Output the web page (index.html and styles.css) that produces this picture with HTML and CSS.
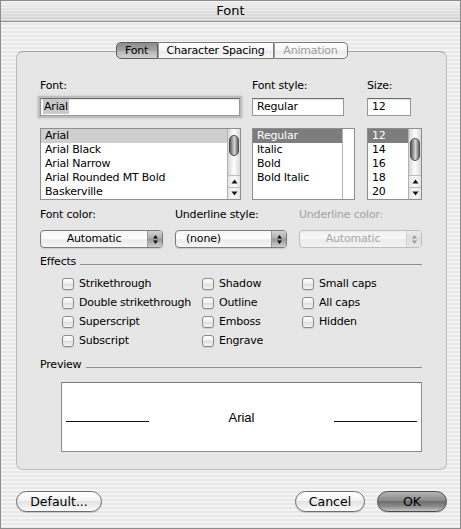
FILE: index.html
```html
<!DOCTYPE html>
<html>
<head>
<meta charset="utf-8">
<title>Font</title>
<link rel="stylesheet" href="styles.css">
</head>
<body>
<div class="window">
  <div class="titlebar">Font</div>
  <div class="main">
    <div class="tabs">
      <div class="tab sel w1">Font</div>
      <div class="tab w2">Character Spacing</div>
      <div class="tab dis w3">Animation</div>
    </div>
    <div class="group">
      <div class="top">
        <div class="col c1">
          <div class="label">Font:</div>
          <div class="field f1 focus"><span class="seltext">Arial</span></div>
          <div class="list">
            <div class="items">
              <div class="item hl">Arial</div>
              <div class="item">Arial Black</div>
              <div class="item">Arial Narrow</div>
              <div class="item">Arial Rounded MT Bold</div>
              <div class="item">Baskerville</div>
            </div>
            <div class="scroll">
              <div class="thumb"></div>
              <div class="fill"></div>
              <div class="arr"><svg width="7" height="5" viewBox="0 0 7 5"><path d="M3.5 0.5 L6.5 4.5 H0.5Z" fill="#111"/></svg></div>
              <div class="arr"><svg width="7" height="5" viewBox="0 0 7 5"><path d="M0.5 0.5 H6.5 L3.5 4.5Z" fill="#111"/></svg></div>
            </div>
          </div>
        </div>
        <div class="col c2">
          <div class="label">Font style:</div>
          <div class="field f2">Regular</div>
          <div class="list">
            <div class="items">
              <div class="item dk">Regular</div>
              <div class="item">Italic</div>
              <div class="item">Bold</div>
              <div class="item">Bold Italic</div>
            </div>
            <div class="scroll empty"></div>
          </div>
        </div>
        <div class="col c3">
          <div class="label">Size:</div>
          <div class="field f3">12</div>
          <div class="list">
            <div class="items">
              <div class="item dk">12</div>
              <div class="item">14</div>
              <div class="item">16</div>
              <div class="item">18</div>
              <div class="item">20</div>
            </div>
            <div class="scroll">
              <div class="thumb big"></div>
              <div class="fill"></div>
              <div class="arr"><svg width="7" height="5" viewBox="0 0 7 5"><path d="M3.5 0.5 L6.5 4.5 H0.5Z" fill="#111"/></svg></div>
              <div class="arr"><svg width="7" height="5" viewBox="0 0 7 5"><path d="M0.5 0.5 H6.5 L3.5 4.5Z" fill="#111"/></svg></div>
            </div>
          </div>
        </div>
      </div>

      <div class="pop-labels">
        <div class="label">Font color:</div>
        <div class="label">Underline style:</div>
        <div class="label disabled">Underline color:</div>
      </div>
      <div class="pops">
        <div class="popup"><div class="val">Automatic</div><div class="parr"><svg width="7" height="11" viewBox="0 0 7 11"><path d="M3.5 1 L6 4.5 H1Z M1 6.5 H6 L3.5 10Z" fill="#111"/></svg></div></div>
        <div class="popup"><div class="val left">(none)</div><div class="parr"><svg width="7" height="11" viewBox="0 0 7 11"><path d="M3.5 1 L6 4.5 H1Z M1 6.5 H6 L3.5 10Z" fill="#111"/></svg></div></div>
        <div class="popup off"><div class="val">Automatic</div><div class="parr"><svg width="7" height="11" viewBox="0 0 7 11"><path d="M3.5 1 L6 4.5 H1Z M1 6.5 H6 L3.5 10Z" fill="#9a9a9a"/></svg></div></div>
      </div>

      <div class="sect"><span>Effects</span><div class="rule"></div></div>
      <div class="effects">
        <label class="chk"><span class="cb"></span>Strikethrough</label>
        <label class="chk"><span class="cb"></span>Shadow</label>
        <label class="chk"><span class="cb"></span>Small caps</label>
        <label class="chk"><span class="cb"></span>Double strikethrough</label>
        <label class="chk"><span class="cb"></span>Outline</label>
        <label class="chk"><span class="cb"></span>All caps</label>
        <label class="chk"><span class="cb"></span>Superscript</label>
        <label class="chk"><span class="cb"></span>Emboss</label>
        <label class="chk"><span class="cb"></span>Hidden</label>
        <label class="chk"><span class="cb"></span>Subscript</label>
        <label class="chk"><span class="cb"></span>Engrave</label>
      </div>

      <div class="sect sect2"><span>Preview</span><div class="rule"></div></div>
      <div class="preview">
        <div class="pv-row">
          <div class="pv-line"></div>
          <div class="pv-text">Arial</div>
          <div class="pv-line"></div>
        </div>
      </div>
    </div>

    <div class="buttons">
      <div class="btn default">Default...</div>
      <div class="btn cancel">Cancel</div>
      <div class="btn ok">OK</div>
    </div>
  </div>
</div>
</body>
</html>
```

FILE: styles.css
```css
html, body {
  margin: 0;
  padding: 0;
  background: #fff;
}
body {
  font-family: "DejaVu Sans", sans-serif;
  font-size: 11px;
  letter-spacing: -0.2px;
  color: #000;
}
.window {
  width: 461px;
  height: 529px;
  box-sizing: border-box;
  border: 1px solid #8c8c8c;
  background: repeating-linear-gradient(#f4f4f4 0 2px, #e8e8e8 2px 4px);
  display: flex;
  flex-direction: column;
}
.titlebar {
  height: 20px;
  border-bottom: 1px solid #8f8f8f;
  background:
    repeating-linear-gradient(rgba(255,255,255,0.35) 0 1px, transparent 1px 3px),
    linear-gradient(#eeeeee, #d2d2d2);
  text-align: center;
  font-size: 13px;
  line-height: 20px;
  letter-spacing: 0;
}
.main {
  padding: 20px 13px 0 15px;
}
.tabs {
  display: flex;
  justify-content: center;
  position: relative;
  z-index: 1;
  height: 17px;
}
.tab {
  height: 17px;
  box-sizing: border-box;
  border: 1px solid #7a7a7a;
  border-left: 1px solid #a0a0a0;
  line-height: 15px;
  text-align: center;
  background: linear-gradient(#ffffff, #f6f6f6 50%, #ebebeb 52%, #f8f8f8);
}
.tab:first-child {
  border-left: 1px solid #6a6a6a;
  border-radius: 5px 0 0 5px;
}
.tab:last-child {
  border-radius: 0 5px 5px 0;
}
.tab.sel {
  background: linear-gradient(#8c8c8c, #a4a4a4 50%, #b4b4b4 52%, #d2d2d2);
  border-color: #5e5e5e;
}
.tab.dis { color: #9c9c9c; }
.w1 { width: 42px; }
.w2 { width: 116px; }
.w3 { width: 74px; }

.group {
  margin-top: -8px;
  height: 419px;
  box-sizing: border-box;
  border: 1px solid #bcbcbc;
  border-top-color: #a4a4a4;
  border-radius: 7px;
  background: #e6e6e6;
  padding: 27px 24px 0 23px;
}
.top {
  display: flex;
}
.c1 { width: 201px; margin-right: 11px; }
.c2 { width: 103px; margin-right: 12px; }
.c3 { width: 55px; }
.label {
  height: 13px;
  line-height: 13px;
  margin-bottom: 6px;
  white-space: nowrap;
}
.label.disabled { color: #a2a2a2; }
.field {
  height: 18px;
  box-sizing: border-box;
  border: 1px solid #979797;
  border-top-color: #6c6c6c;
  background: #fff;
  box-shadow: inset 0 1px 1px rgba(0,0,0,0.12);
  line-height: 16px;
  padding-left: 4px;
}
.f1 { width: 200px; padding-left: 2px; }
.f2 { width: 92px; }
.f3 { width: 44px; }
.field.focus {
  box-shadow: 0 0 0 2px #bdbdbd, 0 0 2px 3px rgba(0,0,0,0.08), inset 0 1px 1px rgba(0,0,0,0.12);
}
.seltext {
  background: #c9c9c9;
  padding: 1px 1px;
}
.list {
  margin-top: 12px;
  height: 72px;
  box-sizing: border-box;
  border: 1px solid #8e8e8e;
  background: #fff;
  display: flex;
}
.items {
  flex: 1;
  min-width: 0;
}
.item {
  height: 14px;
  line-height: 14px;
  padding-left: 4px;
  white-space: nowrap;
  overflow: hidden;
}
.c2 .item, .c3 .item { padding-left: 4px; }
.item.hl { background: #cfcfcf; }
.item.dk { background: #7d7d7d; color: #fff; }
.scroll {
  width: 13px;
  box-sizing: border-box;
  border-left: 1px solid #b2b2b2;
  display: flex;
  flex-direction: column;
  background: linear-gradient(to right, #d6d6d6, #fafafa 45%, #fafafa 55%, #d9d9d9);
}
.scroll.empty {
  width: 12px;
  background: #fff;
}
.thumb {
  margin: 6px 1px 0;
  height: 19px;
  border-radius: 6px;
  border: 1px solid #4f4f4f;
  background: linear-gradient(to right, #5a5a5a, #a9a9a9 35%, #d6d6d6 55%, #666666);
}
.thumb.big { margin-top: 9px; height: 21px; }
.fill { flex: 1; }
.arr {
  height: 11px;
  border-top: 1px solid #bdbdbd;
  background: linear-gradient(to right, #e4e4e4, #fbfbfb 50%, #e4e4e4);
  display: flex;
  align-items: center;
  justify-content: center;
}

.pop-labels, .pops {
  display: grid;
  grid-template-columns: 123px 112px 123px;
  column-gap: 12px;
}
.pop-labels { margin-top: 8px; }
.pop-labels .label { margin-bottom: 0; }
.pops { margin-top: 9px; }
.popup {
  height: 18px;
  box-sizing: border-box;
  border: 1px solid #7c7c7c;
  border-radius: 4px;
  display: flex;
  background: linear-gradient(#f6f6f6, #ffffff 45%, #ebebeb 55%, #f7f7f7);
  box-shadow: 0 1px 1px rgba(0,0,0,0.12);
}
.popup .val {
  flex: 1;
  text-align: center;
  line-height: 16px;
  white-space: nowrap;
}
.popup .val.left {
  text-align: left;
  padding-left: 10px;
}
.parr {
  width: 14px;
  border-left: 1px solid #9a9a9a;
  border-radius: 0 3px 3px 0;
  background: linear-gradient(#d2d2d2, #a9a9a9 50%, #989898 52%, #cfcfcf);
  display: flex;
  align-items: center;
  justify-content: center;
}
.popup.off {
  border-color: #bdbdbd;
  color: #a6a6a6;
  box-shadow: none;
  background: linear-gradient(#f0f0f0, #f8f8f8 45%, #ececec 55%, #f3f3f3);
}
.popup.off .parr {
  border-left-color: #cfcfcf;
  background: linear-gradient(#ebebeb, #dedede 50%, #e9e9e9);
}

.sect {
  display: flex;
  height: 13px;
  line-height: 13px;
  margin-top: 7px;
}
.sect .rule {
  flex: 1;
  height: 1px;
  background: #8e8e8e;
  margin: 9px 0 0 4px;
}
.sect2 { margin-top: 8px; }
.sect2 .rule { margin-left: 5px; }
.effects {
  display: grid;
  grid-template-columns: 140px 100px auto;
  grid-auto-rows: 19px;
  margin: 6px 0 0 22px;
}
.chk {
  display: flex;
  align-items: center;
  gap: 5px;
  white-space: nowrap;
}
.cb {
  flex: none;
  width: 12px;
  height: 12px;
  box-sizing: border-box;
  border: 1px solid #8a8a8a;
  border-radius: 3px;
  background: linear-gradient(#fefefe, #eeeeee 50%, #dfdfdf 55%, #f7f7f7);
  box-shadow: 0 1px 1px rgba(0,0,0,0.1);
}
.preview {
  margin: 11px 0 0 21px;
  height: 70px;
  box-sizing: border-box;
  border: 1px solid #8c8c8c;
  border-top-color: #7a7a7a;
  background: #fff;
  padding: 27px 4px 0 4px;
}
.pv-row {
  display: flex;
  align-items: baseline;
  justify-content: space-between;
}
.pv-line {
  width: 83px;
  height: 1px;
  background: #111;
}
.pv-text {
  font-family: "Liberation Sans", Arial, sans-serif;
  font-size: 13px;
  letter-spacing: 0;
  line-height: 15px;
}

.buttons {
  display: flex;
  gap: 12px;
  margin-top: 21px;
}
.btn {
  height: 21px;
  box-sizing: border-box;
  border: 1px solid #6c6c6c;
  border-radius: 11px;
  font-size: 12.5px;
  letter-spacing: 0;
  line-height: 19px;
  text-align: center;
  background: linear-gradient(#ffffff 0%, #f3f3f3 45%, #e3e3e3 50%, #eeeeee 75%, #fdfdfd 100%);
  box-shadow: 0 1px 1px rgba(0,0,0,0.15);
}
.default { width: 86px; margin-right: auto; }
.cancel { width: 70px; }
.ok {
  width: 70px;
  border-color: #4c4c4c;
  background: linear-gradient(#b4b4b4 0%, #8a8a8a 45%, #6e6e6e 50%, #8a8a8a 75%, #c4c4c4 100%);
}
```
